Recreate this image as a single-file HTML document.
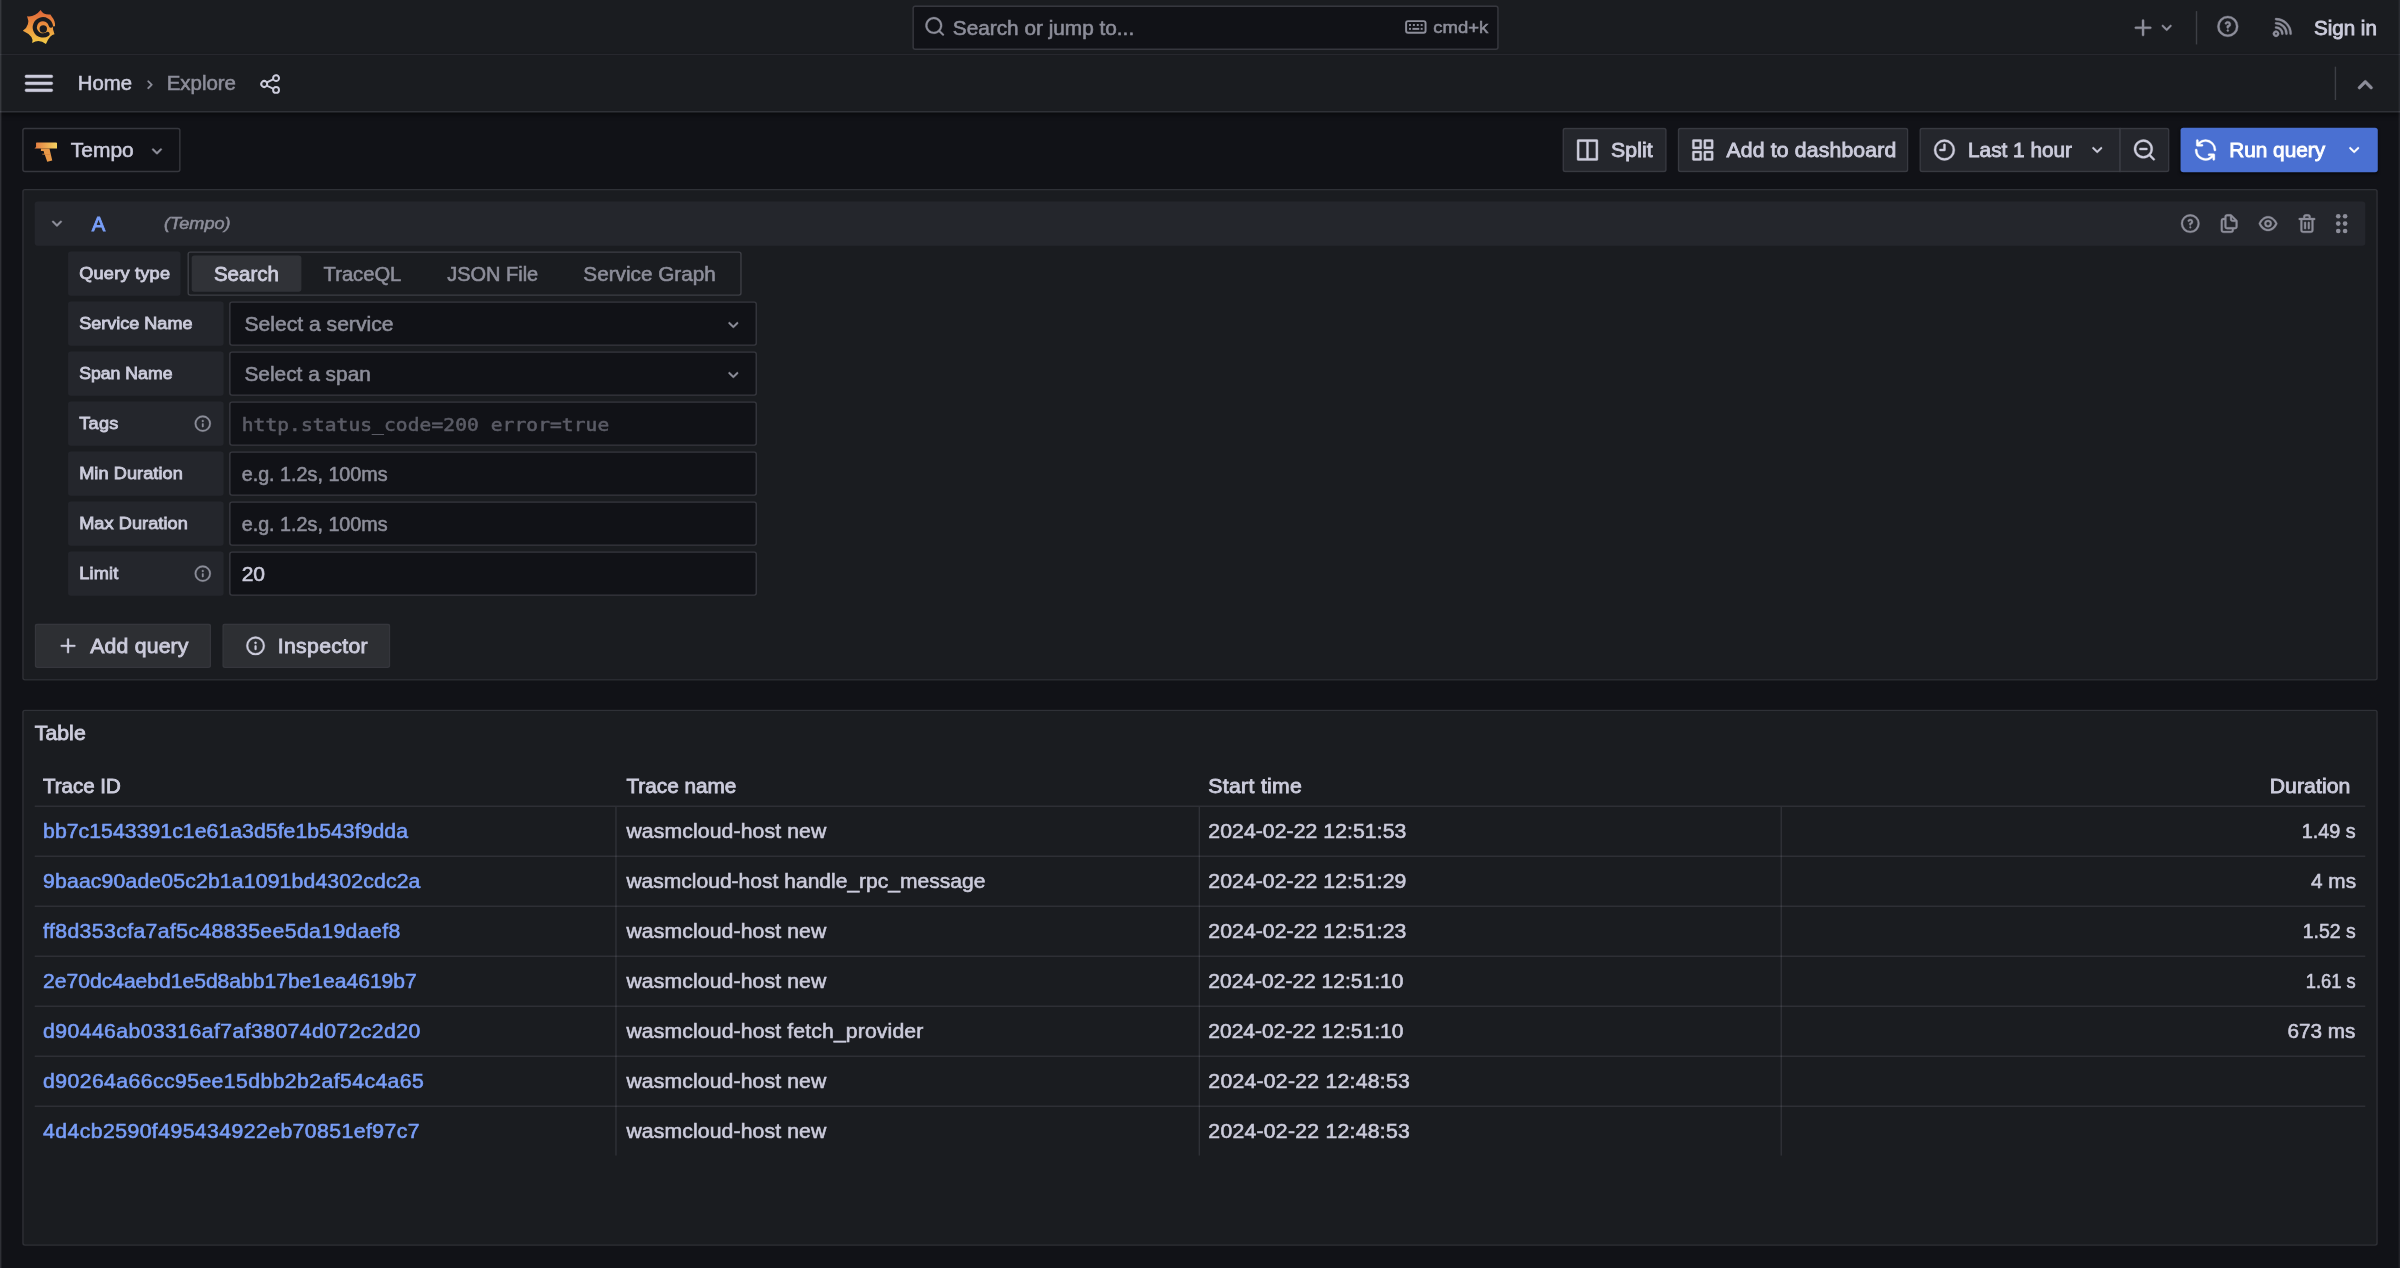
<!DOCTYPE html>
<html lang="en">
<head>
<meta charset="utf-8">
<title>Explore - Tempo - Grafana</title>
<style>
*{box-sizing:border-box;margin:0;padding:0}
html,body{width:2400px;height:1268px;overflow:hidden;background:#111217}
body{font-family:"Liberation Sans",Arial,sans-serif;font-size:14px;line-height:22px;color:#ccccdc;-webkit-font-smoothing:antialiased}
#app{position:absolute;left:0;top:0;width:1728px;height:913px;transform:scale(1.388889);transform-origin:0 0;overflow:hidden;will-change:transform}
.abs{position:absolute}
svg{display:block;fill:currentColor}
.t.md{-webkit-text-stroke:.58px currentColor}
.t{position:absolute;white-space:nowrap;letter-spacing:.03em;-webkit-text-stroke:.4px currentColor}
/* top bars */
#l1{left:0;top:0;width:1728px;height:40px;background:#1a1c20;border-bottom:1px solid rgba(204,204,220,.12)}
#l2{left:0;top:40px;width:1728px;height:41px;background:#1a1c20;border-bottom:1px solid rgba(204,204,220,.12);box-shadow:0 2px 4px rgba(0,0,0,.55)}
#edgeL{left:0;top:0;width:.7px;height:913px;background:rgba(204,204,220,.16);z-index:50}
#edgeR{left:1726.9px;top:0;width:1.1px;height:913px;background:rgba(204,204,220,.09);z-index:50}
#search{left:657px;top:3.8px;width:422px;height:32px;background:#111217;border:1px solid rgba(204,204,220,.2);border-radius:2px}
.vdiv{width:1px;height:24px;background:rgba(204,204,220,.2)}
/* toolbar buttons */
.btn{position:absolute;top:92px;height:32px;border-radius:2px;background:#24262c;border:1px solid rgba(204,204,220,.12)}
.btn2{position:absolute;height:32px;border-radius:2px;background:rgba(204,204,220,.105);border:1px solid rgba(204,204,220,.055)}
/* panels */
.panel{position:absolute;left:16px;width:1696px;background:#1a1c20;border:1px solid rgba(204,204,220,.12);border-radius:2px}
#qhead{left:25px;top:145px;width:1678px;height:32px;background:#24262c;border-radius:2px}
.lbl{position:absolute;left:49px;width:112px;height:32px;background:#24262c;border-radius:2px}
.inp{position:absolute;left:165px;width:380px;height:32px;background:#111217;border:1px solid rgba(204,204,220,.2);border-radius:2px}
/* table */
.hl{position:absolute;left:25px;width:1678px;height:1px;background:rgba(204,204,220,.12)}
.vl{position:absolute;top:580px;width:1px;height:252px;background:rgba(204,204,220,.12)}
</style>
</head>
<body>
<div id="app">
<div id="l1" class="abs"></div>
<svg class="abs" style="left:10.8px;top:2.88px" width="36" height="33.12" viewBox="0 0 1378 1268">
<linearGradient id="gg" x1="0" y1="1" x2="0" y2="0"><stop offset="0" stop-color="#f3cc46"/><stop offset=".55" stop-color="#eb8f3e"/><stop offset="1" stop-color="#df6439"/></linearGradient>
<path fill="url(#gg)" d="M700,162 Q766,300 968,285 L1008,345 C1078,430 1106,520 1096,612 L1048,628 L1044,705 L1082,830 Q960,836 845,1098 Q655,951 465,1072 Q528,886 208,735 Q430,585 325,335 Q538,362 700,162 Z"/>
<path fill="none" stroke="#1a1c20" stroke-width="116" stroke-linecap="round" d="M982,592 A224,224 0 1 0 890,822"/>
<circle cx="772" cy="684" r="102" fill="#1a1c20"/>
<path fill="#1a1c20" d="M1030,612 L1106,626 L1062,722 Z"/>
</svg>
<div id="search" class="abs"></div>
<svg class="abs" style="left:664.77px;top:11.30px;color:#8d8e9a;" width="16" height="16" viewBox="0 0 24 24"><path stroke="currentColor" stroke-width="0.35" d="M21.71,20.29,18,16.61A9,9,0,1,0,16.61,18l3.68,3.68a1,1,0,0,0,1.42,0A1,1,0,0,0,21.71,20.29ZM11,18a7,7,0,1,1,7-7A7,7,0,0,1,11,18Z"/></svg>
<span class="t " style="letter-spacing:0.000px;transform:scaleX(1.0691);transform-origin:left center;top:8.51px;font-size:14px;left:686.16px;color:#8d8e9a;">Search or jump to...</span>
<svg class="abs" style="left:1010.74px;top:11.02px;color:#8d8e9a" width="16.8" height="16.8" viewBox="0 0 24 24"><path fill-rule="evenodd" d="M20,5H4A3,3,0,0,0,1,8v8a3,3,0,0,0,3,3H20a3,3,0,0,0,3-3V8A3,3,0,0,0,20,5Zm1,11a1,1,0,0,1-1,1H4a1,1,0,0,1-1-1V8A1,1,0,0,1,4,7H20a1,1,0,0,1,1,1Z"/><rect x="5" y="9" width="2" height="2"/><rect x="9" y="9" width="2" height="2"/><rect x="13" y="9" width="2" height="2"/><rect x="17" y="9" width="2" height="2"/><rect x="5" y="13" width="2" height="2"/><rect x="8.5" y="13" width="7" height="2"/><rect x="17" y="13" width="2" height="2"/></svg>
<span class="t " style="letter-spacing:0.000px;transform:scaleX(1.0653);transform-origin:left center;top:9.09px;font-size:12.5px;left:1031.62px;color:#8d8e9a;">cmd+k</span>
<svg class="abs" style="left:1534.25px;top:10.58px;color:#8d8e9a;" width="18" height="18" viewBox="0 0 24 24"><path stroke="currentColor" stroke-width="0.35" d="M19,11H13V5a1,1,0,0,0-2,0v6H5a1,1,0,0,0,0,2h6v6a1,1,0,0,0,2,0V13h6a1,1,0,0,0,0-2Z"/></svg>
<svg class="abs" style="left:1552.24px;top:11.58px;color:#8d8e9a;" width="16" height="16" viewBox="0 0 24 24"><path stroke="currentColor" stroke-width="0.35" d="M17,9.17a1,1,0,0,0-1.41,0L12,12.71,8.46,9.17a1,1,0,0,0-1.41,0,1,1,0,0,0,0,1.42l4.24,4.24a1,1,0,0,0,1.42,0L17,10.59A1,1,0,0,0,17,9.17Z"/></svg>
<div class="abs vdiv" style="left:1581.41px;top:7.63px"></div>
<svg class="abs" style="left:1595.09px;top:10.15px;color:#8d8e9a;" width="18" height="18" viewBox="0 0 24 24"><path stroke="currentColor" stroke-width="0.35" d="M11.29,15.29a1.58,1.58,0,0,0-.12.15.76.76,0,0,0-.09.18.64.64,0,0,0-.06.18,1.36,1.36,0,0,0,0,.2.84.84,0,0,0,.08.38.9.9,0,0,0,.54.54.94.94,0,0,0,.76,0,.9.9,0,0,0,.54-.54A1,1,0,0,0,13,16a1,1,0,0,0-.29-.71A1,1,0,0,0,11.29,15.29ZM12,2A10,10,0,1,0,22,12,10,10,0,0,0,12,2Zm0,18a8,8,0,1,1,8-8A8,8,0,0,1,12,20ZM12,7A3,3,0,0,0,9.4,8.5a1,1,0,1,0,1.73,1A1,1,0,0,1,12,9a1,1,0,0,1,0,2,1,1,0,0,0-1,1v1a1,1,0,0,0,2,0v-.18A3,3,0,0,0,12,7Z"/></svg>
<svg class="abs" style="left:1635.19px;top:10.08px;color:#8d8e9a;" width="18" height="18" viewBox="0 0 24 24"><path stroke="currentColor" stroke-width="0.35" d="M2.88,16.88a3,3,0,0,0,0,4.24,3,3,0,0,0,4.24,0,3,3,0,0,0-4.24-4.24Zm2.83,2.83a1,1,0,0,1-1.42-1.42,1,1,0,0,1,1.42,0A1,1,0,0,1,5.71,19.71ZM5,12a1,1,0,0,0,0,2,5,5,0,0,1,5,5,1,1,0,0,0,2,0,7,7,0,0,0-7-7ZM5,8A1,1,0,0,0,5,10a9,9,0,0,1,9,9,1,1,0,0,0,2,0,11.08,11.08,0,0,0-3.22-7.78A11.08,11.08,0,0,0,5,8Zm10.61.39A15.11,15.11,0,0,0,5,4,1,1,0,0,0,5,6,13,13,0,0,1,18,19a1,1,0,0,0,2,0A15.11,15.11,0,0,0,15.61,8.39Z"/></svg>
<span class="t md" style="letter-spacing:0.000px;transform:scaleX(1.0595);transform-origin:left center;top:9.02px;font-size:14px;left:1666.37px;color:#ccccdc;">Sign in</span>
<div id="l2" class="abs"></div>
<svg class="abs" style="left:16.08px;top:47.98px;color:#ccccdc;" width="24" height="24" viewBox="0 0 24 24"><path stroke="currentColor" stroke-width="0.35" d="M3,8H21a1,1,0,0,0,0-2H3A1,1,0,0,0,3,8Zm18,8H3a1,1,0,0,0,0,2H21a1,1,0,0,0,0-2Zm0-5H3a1,1,0,0,0,0,2H21a1,1,0,0,0,0-2Z"/></svg>
<span class="t " style="letter-spacing:0.000px;transform:scaleX(1.0444);transform-origin:left center;top:49.48px;font-size:14px;left:56.38px;color:#ccccdc;">Home</span>
<svg class="abs" style="left:100.64px;top:53.84px;color:#8d8e9a;" width="14" height="14" viewBox="0 0 24 24"><path stroke="currentColor" stroke-width="0.35" d="M14.83,11.29,10.59,7.05a1,1,0,0,0-1.42,0,1,1,0,0,0,0,1.41L12.71,12,9.17,15.54a1,1,0,0,0,0,1.41,1,1,0,0,0,.71.29,1,1,0,0,0,.71-.29l4.24-4.24A1,1,0,0,0,14.83,11.29Z"/></svg>
<span class="t " style="letter-spacing:-0.000px;transform:scaleX(1.0512);transform-origin:left center;top:49.48px;font-size:14px;left:119.52px;color:#8d8e9a;">Explore</span>
<svg class="abs" style="left:185.90px;top:52.41px;color:#ccccdc;" width="17" height="17" viewBox="0 0 24 24"><path stroke="currentColor" stroke-width="0" d="M18,14a4,4,0,0,0-3.08,1.48l-5.1-2.35a3.64,3.64,0,0,0,0-2.26l5.1-2.35A4,4,0,1,0,14,6a4.17,4.17,0,0,0,.07.71L8.79,9.14a4,4,0,1,0,0,5.72l5.28,2.43A4.17,4.17,0,0,0,14,18a4,4,0,1,0,4-4ZM18,4a2,2,0,1,1-2,2A2,2,0,0,1,18,4ZM6,14a2,2,0,1,1,2-2A2,2,0,0,1,6,14Zm12,6a2,2,0,1,1,2-2A2,2,0,0,1,18,20Z"/></svg>
<div class="abs vdiv" style="left:1681.06px;top:48.17px"></div>
<svg class="abs" style="left:1691.02px;top:48.62px;color:#8d8e9a;" width="24" height="24" viewBox="0 0 24 24"><path stroke="currentColor" stroke-width="0.35" d="M17,13.41,12.71,9.17a1,1,0,0,0-1.42,0L7.05,13.41a1,1,0,0,0,0,1.42,1,1,0,0,0,1.41,0L12,11.29l3.54,3.54a1,1,0,0,0,.7.29,1,1,0,0,0,.71-.29A1,1,0,0,0,17,13.41Z"/></svg>
<div class="abs" style="left:16.06px;top:92px;width:113.54px;height:32px;background:#111217;border:1px solid rgba(204,204,220,.2);border-radius:2px"></div>
<svg class="abs" style="left:18px;top:93.6px" width="36" height="28.8" viewBox="0 0 1585 1268">
<linearGradient id="tg" x1="0" y1="0" x2="1" y2="0"><stop offset="0" stop-color="#e27941"/><stop offset="1" stop-color="#f4d260"/></linearGradient>
<path fill="url(#tg)" d="M365,378 H985 Q1015,378 1015,408 V572 H300 L350,520 V393 Q350,378 365,378 Z"/>
<path fill="#e89847" d="M505,572 H775 L865,950 L705,990 L625,760 H550 V735 H612 L590,645 H505 Z"/>
<path fill="#cf7a3a" d="M612,748 H812 V766 H618 Z"/>
</svg>
<span class="t " style="letter-spacing:0.000px;transform:scaleX(1.0775);transform-origin:left center;top:96.78px;font-size:14px;left:51.34px;color:#ccccdc;">Tempo</span>
<svg class="abs" style="left:104.75px;top:101.15px;color:#8d8e9a;" width="16" height="16" viewBox="0 0 24 24"><path stroke="currentColor" stroke-width="0.35" d="M17,9.17a1,1,0,0,0-1.41,0L12,12.71,8.46,9.17a1,1,0,0,0-1.41,0,1,1,0,0,0,0,1.42l4.24,4.24a1,1,0,0,0,1.42,0L17,10.59A1,1,0,0,0,17,9.17Z"/></svg>
<div class="btn" style="left:1125.07px;width:74.95px;"></div>
<svg class="abs" style="left:1134.36px;top:98.86px;color:#ccccdc;" width="18" height="18" viewBox="0 0 24 24"><path stroke="currentColor" stroke-width="0.35" d="M21,2H3A1,1,0,0,0,2,3V21a1,1,0,0,0,1,1H21a1,1,0,0,0,1-1V3A1,1,0,0,0,21,2ZM11,20H4V4h7Zm9,0H13V4h7Z"/></svg>
<span class="t md" style="letter-spacing:0.054px;transform:scaleX(1.0900);transform-origin:left center;top:96.78px;font-size:14px;left:1160.42px;color:#ccccdc;">Split</span>
<div class="btn" style="left:1207.94px;width:166.03px;"></div>
<svg class="abs" style="left:1217.02px;top:98.86px;color:#ccccdc;" width="18" height="18" viewBox="0 0 24 24"><path stroke="currentColor" stroke-width="0.35" d="M10,13H3a1,1,0,0,0-1,1v7a1,1,0,0,0,1,1h7a1,1,0,0,0,1-1V14A1,1,0,0,0,10,13ZM9,20H4V15H9ZM21,2H14a1,1,0,0,0-1,1v7a1,1,0,0,0,1,1h7a1,1,0,0,0,1-1V3A1,1,0,0,0,21,2ZM20,9H15V4h5Zm1,4H14a1,1,0,0,0-1,1v7a1,1,0,0,0,1,1h7a1,1,0,0,0,1-1V14A1,1,0,0,0,21,13Zm-1,7H15V15h5ZM10,2H3A1,1,0,0,0,2,3v7a1,1,0,0,0,1,1h7a1,1,0,0,0,1-1V3A1,1,0,0,0,10,2ZM9,9H4V4H9Z"/></svg>
<span class="t md" style="letter-spacing:0.114px;transform:scaleX(1.0900);transform-origin:left center;top:96.78px;font-size:14px;left:1242.72px;color:#ccccdc;">Add to dashboard</span>
<div class="btn" style="left:1381.9px;width:144.86px;border-radius:2px 0 0 2px"></div>
<svg class="abs" style="left:1390.82px;top:98.86px;color:#ccccdc;" width="18" height="18" viewBox="0 0 24 24"><path stroke="currentColor" stroke-width="0.35" d="M12,2A10,10,0,1,0,22,12,10.01114,10.01114,0,0,0,12,2Zm0,18a8,8,0,1,1,8-8A8.00917,8.00917,0,0,1,12,20ZM12,6a.99974.99974,0,0,0-1,1v4H8a1,1,0,0,0,0,2h4a.99974.99974,0,0,0,1-1V7A.99974.99974,0,0,0,12,6Z"/></svg>
<span class="t md" style="letter-spacing:0.000px;transform:scaleX(1.0688);transform-origin:left center;top:96.78px;font-size:14px;left:1416.74px;color:#ccccdc;">Last 1 hour</span>
<svg class="abs" style="left:1501.84px;top:100.14px;color:#ccccdc;" width="16" height="16" viewBox="0 0 24 24"><path stroke="currentColor" stroke-width="0.35" d="M17,9.17a1,1,0,0,0-1.41,0L12,12.71,8.46,9.17a1,1,0,0,0-1.41,0,1,1,0,0,0,0,1.42l4.24,4.24a1,1,0,0,0,1.42,0L17,10.59A1,1,0,0,0,17,9.17Z"/></svg>
<div class="btn" style="left:1525.9px;width:36px;border-radius:0 2px 2px 0"></div>
<svg class="abs" style="left:1534.90px;top:99.00px;color:#ccccdc;" width="18" height="18" viewBox="0 0 24 24"><path stroke="currentColor" stroke-width="0.35" d="M21.71,20.29,18,16.61A9,9,0,1,0,16.61,18l3.68,3.68a1,1,0,0,0,1.42,0A1,1,0,0,0,21.71,20.29ZM11,18a7,7,0,1,1,7-7A7,7,0,0,1,11,18Zm3-8H8a1,1,0,0,0,0,2h6a1,1,0,0,0,0-2Z"/></svg>
<div class="abs" style="left:1569.6px;top:91.66px;width:142.78px;height:32.69px;background:#4a70d2;border-radius:2px;box-shadow:0 1px 2px rgba(0,0,0,.6)"></div>
<svg class="abs" style="left:1578.96px;top:98.86px;color:#fff;" width="18" height="18" viewBox="0 0 24 24"><path stroke="currentColor" stroke-width="0.35" d="M19.91,15.51H15.38a1,1,0,0,0,0,2h2.4A8,8,0,0,1,4,12a1,1,0,0,0-2,0,10,10,0,0,0,16.88,7.23V21a1,1,0,0,0,2,0V16.5A1,1,0,0,0,19.91,15.51ZM12,2A10,10,0,0,0,5.12,4.77V3a1,1,0,0,0-2,0V7.5a1,1,0,0,0,1,1h4.5a1,1,0,0,0,0-2H6.22A8,8,0,0,1,20,12a1,1,0,0,0,2,0A10,10,0,0,0,12,2Z"/></svg>
<span class="t md" style="letter-spacing:0.000px;transform:scaleX(1.0701);transform-origin:left center;top:96.78px;font-size:14px;left:1604.88px;color:#fff;">Run query</span>
<svg class="abs" style="left:1687.24px;top:100.36px;color:#fff;" width="16" height="16" viewBox="0 0 24 24"><path stroke="currentColor" stroke-width="0.35" d="M17,9.17a1,1,0,0,0-1.41,0L12,12.71,8.46,9.17a1,1,0,0,0-1.41,0,1,1,0,0,0,0,1.42l4.24,4.24a1,1,0,0,0,1.42,0L17,10.59A1,1,0,0,0,17,9.17Z"/></svg>
<div class="panel" style="top:136.3px;height:354.17px"></div>
<div id="qhead" class="abs"></div>
<svg class="abs" style="left:33.04px;top:153.28px;color:#8d8e9a;" width="16" height="16" viewBox="0 0 24 24"><path stroke="currentColor" stroke-width="0.35" d="M17,9.17a1,1,0,0,0-1.41,0L12,12.71,8.46,9.17a1,1,0,0,0-1.41,0,1,1,0,0,0,0,1.42l4.24,4.24a1,1,0,0,0,1.42,0L17,10.59A1,1,0,0,0,17,9.17Z"/></svg>
<span class="t md" style="letter-spacing:0.000px;transform:scaleX(1.0478);transform-origin:left center;top:149.56px;font-size:14px;left:66.02px;color:#799ef8;">A</span>
<span class="t " style="letter-spacing:-0.000px;transform:scaleX(1.0852);transform-origin:left center;top:149.56px;font-size:12px;left:117.58px;color:#8d8e9a;font-style:italic;">(Tempo)</span>
<svg class="abs" style="left:1568.80px;top:152.78px;color:#8d8e9a;" width="16" height="16" viewBox="0 0 24 24"><path stroke="currentColor" stroke-width="0.35" d="M11.29,15.29a1.58,1.58,0,0,0-.12.15.76.76,0,0,0-.09.18.64.64,0,0,0-.06.18,1.36,1.36,0,0,0,0,.2.84.84,0,0,0,.08.38.9.9,0,0,0,.54.54.94.94,0,0,0,.76,0,.9.9,0,0,0,.54-.54A1,1,0,0,0,13,16a1,1,0,0,0-.29-.71A1,1,0,0,0,11.29,15.29ZM12,2A10,10,0,1,0,22,12,10,10,0,0,0,12,2Zm0,18a8,8,0,1,1,8-8A8,8,0,0,1,12,20ZM12,7A3,3,0,0,0,9.4,8.5a1,1,0,1,0,1.73,1A1,1,0,0,1,12,9a1,1,0,0,1,0,2,1,1,0,0,0-1,1v1a1,1,0,0,0,2,0v-.18A3,3,0,0,0,12,7Z"/></svg>
<svg class="abs" style="left:1596.88px;top:152.78px;color:#8d8e9a;" width="16" height="16" viewBox="0 0 24 24"><path stroke="currentColor" stroke-width="0.35" d="M21,8.94a1.31,1.31,0,0,0-.06-.27l0-.09a1.07,1.07,0,0,0-.19-.28h0l-6-6h0a1.07,1.07,0,0,0-.28-.19.32.32,0,0,0-.09,0A.88.88,0,0,0,14.05,2H10A3,3,0,0,0,7,5V6H6A3,3,0,0,0,3,9V19a3,3,0,0,0,3,3h8a3,3,0,0,0,3-3V18h1a3,3,0,0,0,3-3V9S21,9,21,8.94ZM15,5.41,17.59,8H16a1,1,0,0,1-1-1ZM15,19a1,1,0,0,1-1,1H6a1,1,0,0,1-1-1V9A1,1,0,0,1,6,8H7v7a3,3,0,0,0,3,3h5Zm4-4a1,1,0,0,1-1,1H10a1,1,0,0,1-1-1V5a1,1,0,0,1,1-1h3V7a3,3,0,0,0,3,3h3Z"/></svg>
<svg class="abs" style="left:1624.74px;top:152.78px;color:#8d8e9a;" width="16" height="16" viewBox="0 0 24 24"><path stroke="currentColor" stroke-width="0.35" d="M21.92,11.6C19.9,6.91,16.1,4,12,4S4.1,6.91,2.08,11.6a1,1,0,0,0,0,.8C4.1,17.09,7.9,20,12,20s7.9-2.91,9.92-7.6A1,1,0,0,0,21.92,11.6ZM12,18c-3.17,0-6.17-2.29-7.9-6C5.83,8.29,8.83,6,12,6s6.17,2.29,7.9,6C18.17,15.71,15.17,18,12,18ZM12,8a4,4,0,1,0,4,4A4,4,0,0,0,12,8Zm0,6a2,2,0,1,1,2-2A2,2,0,0,1,12,14Z"/></svg>
<svg class="abs" style="left:1652.82px;top:152.78px;color:#8d8e9a;" width="16" height="16" viewBox="0 0 24 24"><path stroke="currentColor" stroke-width="0.35" d="M10,18a1,1,0,0,0,1-1V11a1,1,0,0,0-2,0v6A1,1,0,0,0,10,18ZM20,6H16V5a3,3,0,0,0-3-3H11A3,3,0,0,0,8,5V6H4A1,1,0,0,0,4,8H5V19a3,3,0,0,0,3,3h8a3,3,0,0,0,3-3V8h1a1,1,0,0,0,0-2ZM10,5a1,1,0,0,1,1-1h2a1,1,0,0,1,1,1V6H10Zm7,14a1,1,0,0,1-1,1H8a1,1,0,0,1-1-1V8H17Zm-3-1a1,1,0,0,0,1-1V11a1,1,0,0,0-2,0v6A1,1,0,0,0,14,18Z"/></svg>
<svg class="abs" style="left:1678.02px;top:152.78px;color:#8d8e9a" width="16" height="16" viewBox="0 0 24 24"><circle cx="8.3" cy="4" r="2.5"/><circle cx="15.7" cy="4" r="2.5"/><circle cx="8.3" cy="12" r="2.5"/><circle cx="15.7" cy="12" r="2.5"/><circle cx="8.3" cy="20" r="2.5"/><circle cx="15.7" cy="20" r="2.5"/></svg>
<div class="lbl" style="top:181.22px;width:81.36px"></div>
<span class="t md" style="letter-spacing:0.148px;transform:scaleX(1.0900);transform-origin:left center;top:186.06px;font-size:12px;left:56.88px;color:#ccccdc;">Query type</span>
<div class="abs" style="left:134.64px;top:181.22px;width:399.82px;height:32px;background:#1a1c20;border:1px solid rgba(204,204,220,.2);border-radius:2px"></div>
<div class="abs" style="left:137.52px;top:184.1px;width:79.7px;height:26px;background:rgba(204,204,220,.13);border-radius:2px"></div>
<span class="t md" style="letter-spacing:0.000px;transform:scaleX(1.0550);transform-origin:left center;top:185.56px;font-size:14px;left:153.58px;color:#ccccdc;">Search</span>
<span class="t " style="letter-spacing:0.000px;transform:scaleX(1.0368);transform-origin:left center;top:185.56px;font-size:14px;left:233.28px;color:#8d8e9a;">TraceQL</span>
<span class="t " style="letter-spacing:-0.000px;transform:scaleX(1.0270);transform-origin:left center;top:185.56px;font-size:14px;left:322.06px;color:#8d8e9a;">JSON File</span>
<span class="t " style="letter-spacing:0.000px;transform:scaleX(1.0653);transform-origin:left center;top:185.56px;font-size:14px;left:419.98px;color:#8d8e9a;">Service Graph</span>
<div class="lbl" style="top:217.22px"></div>
<span class="t md" style="letter-spacing:-0.000px;transform:scaleX(1.0825);transform-origin:left center;top:222.06px;font-size:12px;left:56.88px;color:#ccccdc;">Service Name</span>
<div class="inp" style="top:217.22px"></div>
<div class="lbl" style="top:253.22px"></div>
<span class="t md" style="letter-spacing:0.000px;transform:scaleX(1.0600);transform-origin:left center;top:258.06px;font-size:12px;left:56.88px;color:#ccccdc;">Span Name</span>
<div class="inp" style="top:253.22px"></div>
<div class="lbl" style="top:289.22px"></div>
<span class="t md" style="letter-spacing:0.173px;transform:scaleX(1.0900);transform-origin:left center;top:294.06px;font-size:12px;left:56.88px;color:#ccccdc;">Tags</span>
<div class="inp" style="top:289.22px"></div>
<div class="lbl" style="top:325.22px"></div>
<span class="t md" style="letter-spacing:0.040px;transform:scaleX(1.0900);transform-origin:left center;top:330.06px;font-size:12px;left:56.88px;color:#ccccdc;">Min Duration</span>
<div class="inp" style="top:325.22px"></div>
<div class="lbl" style="top:361.22px"></div>
<span class="t md" style="letter-spacing:0.037px;transform:scaleX(1.0900);transform-origin:left center;top:366.06px;font-size:12px;left:56.88px;color:#ccccdc;">Max Duration</span>
<div class="inp" style="top:361.22px"></div>
<div class="lbl" style="top:397.22px"></div>
<span class="t md" style="letter-spacing:0.138px;transform:scaleX(1.0900);transform-origin:left center;top:402.06px;font-size:12px;left:56.88px;color:#ccccdc;">Limit</span>
<div class="inp" style="top:397.22px"></div>
<svg class="abs" style="left:138.94px;top:298.06px;color:#8d8e9a;" width="14" height="14" viewBox="0 0 24 24"><path stroke="currentColor" stroke-width="0.35" d="M12,2A10,10,0,1,0,22,12,10.01114,10.01114,0,0,0,12,2Zm0,18a8,8,0,1,1,8-8A8.00917,8.00917,0,0,1,12,20Zm0-8.5a1,1,0,0,0-1,1v3a1,1,0,0,0,2,0v-3A1,1,0,0,0,12,11.5Zm0-4a1.25,1.25,0,1,0,1.25,1.25A1.25,1.25,0,0,0,12,7.5Z"/></svg>
<svg class="abs" style="left:138.94px;top:406.06px;color:#8d8e9a;" width="14" height="14" viewBox="0 0 24 24"><path stroke="currentColor" stroke-width="0.35" d="M12,2A10,10,0,1,0,22,12,10.01114,10.01114,0,0,0,12,2Zm0,18a8,8,0,1,1,8-8A8.00917,8.00917,0,0,1,12,20Zm0-8.5a1,1,0,0,0-1,1v3a1,1,0,0,0,2,0v-3A1,1,0,0,0,12,11.5Zm0-4a1.25,1.25,0,1,0,1.25,1.25A1.25,1.25,0,0,0,12,7.5Z"/></svg>
<span class="t " style="letter-spacing:0.000px;transform:scaleX(1.0855);transform-origin:left center;top:222.21px;font-size:14px;left:175.90px;color:#8d8e9a;">Select a service</span>
<svg class="abs" style="left:519.76px;top:226.14px;color:#8d8e9a;" width="16" height="16" viewBox="0 0 24 24"><path stroke="currentColor" stroke-width="0.35" d="M17,9.17a1,1,0,0,0-1.41,0L12,12.71,8.46,9.17a1,1,0,0,0-1.41,0,1,1,0,0,0,0,1.42l4.24,4.24a1,1,0,0,0,1.42,0L17,10.59A1,1,0,0,0,17,9.17Z"/></svg>
<span class="t " style="letter-spacing:0.000px;transform:scaleX(1.0727);transform-origin:left center;top:258.21px;font-size:14px;left:175.90px;color:#8d8e9a;">Select a span</span>
<svg class="abs" style="left:519.76px;top:262.14px;color:#8d8e9a;" width="16" height="16" viewBox="0 0 24 24"><path stroke="currentColor" stroke-width="0.35" d="M17,9.17a1,1,0,0,0-1.41,0L12,12.71,8.46,9.17a1,1,0,0,0-1.41,0,1,1,0,0,0,0,1.42l4.24,4.24a1,1,0,0,0,1.42,0L17,10.59A1,1,0,0,0,17,9.17Z"/></svg>
<span class="t " style="letter-spacing:0.073px;transform:scaleX(1.0900);transform-origin:left center;top:294.93px;font-size:12.9px;left:174.02px;color:#5b5c66;font-family:'DejaVu Sans Mono','Liberation Mono',monospace;">http.status_code=200 error=true</span>
<span class="t " style="letter-spacing:0.000px;transform:scaleX(1.0155);transform-origin:left center;top:329.56px;font-size:14px;left:174.02px;color:#8d8e9a;">e.g. 1.2s, 100ms</span>
<span class="t " style="letter-spacing:0.000px;transform:scaleX(1.0155);transform-origin:left center;top:365.56px;font-size:14px;left:174.02px;color:#8d8e9a;">e.g. 1.2s, 100ms</span>
<span class="t " style="letter-spacing:0.000px;transform:scaleX(1.0816);transform-origin:left center;top:401.63px;font-size:14px;left:174.46px;color:#ccccdc;">20</span>
<div class="btn2" style="left:24.98px;top:448.78px;width:126.94px"></div>
<svg class="abs" style="left:41.10px;top:457.12px;color:#ccccdc;" width="16" height="16" viewBox="0 0 24 24"><path stroke="currentColor" stroke-width="0.35" d="M19,11H13V5a1,1,0,0,0-2,0v6H5a1,1,0,0,0,0,2h6v6a1,1,0,0,0,2,0V13h6a1,1,0,0,0,0-2Z"/></svg>
<span class="t md" style="letter-spacing:0.130px;transform:scaleX(1.0900);transform-origin:left center;top:453.90px;font-size:14px;left:64.80px;color:#ccccdc;">Add query</span>
<div class="btn2" style="left:160.06px;top:448.78px;width:120.74px"></div>
<svg class="abs" style="left:175.96px;top:457.12px;color:#ccccdc;" width="16" height="16" viewBox="0 0 24 24"><path stroke="currentColor" stroke-width="0.35" d="M12,2A10,10,0,1,0,22,12,10.01114,10.01114,0,0,0,12,2Zm0,18a8,8,0,1,1,8-8A8.00917,8.00917,0,0,1,12,20Zm0-8.5a1,1,0,0,0-1,1v3a1,1,0,0,0,2,0v-3A1,1,0,0,0,12,11.5Zm0-4a1.25,1.25,0,1,0,1.25,1.25A1.25,1.25,0,0,0,12,7.5Z"/></svg>
<span class="t md" style="letter-spacing:0.218px;transform:scaleX(1.0900);transform-origin:left center;top:453.90px;font-size:14px;left:199.94px;color:#ccccdc;">Inspector</span>
<div class="panel" style="top:511.13px;height:385.7px"></div>
<span class="t md" style="letter-spacing:0.049px;transform:scaleX(1.0900);transform-origin:left center;top:516.98px;font-size:14px;left:25.20px;color:#ccccdc;">Table</span>
<span class="t md" style="letter-spacing:-0.000px;transform:scaleX(1.0524);transform-origin:left center;top:555.14px;font-size:14px;left:31.18px;color:#ccccdc;">Trace ID</span>
<span class="t md" style="letter-spacing:0.000px;transform:scaleX(1.0676);transform-origin:left center;top:555.14px;font-size:14px;left:450.72px;color:#ccccdc;">Trace name</span>
<span class="t md" style="letter-spacing:0.209px;transform:scaleX(1.0900);transform-origin:left center;top:555.14px;font-size:14px;left:869.98px;color:#ccccdc;">Start time</span>
<span class="t md" style="letter-spacing:0.051px;transform:scaleX(1.0900);transform-origin:right center;top:555.14px;font-size:14px;right:35.50px;color:#ccccdc;">Duration</span>
<div class="hl" style="top:579.96px"></div>
<div class="hl" style="top:615.96px"></div>
<div class="hl" style="top:651.96px"></div>
<div class="hl" style="top:687.96px"></div>
<div class="hl" style="top:723.96px"></div>
<div class="hl" style="top:759.96px"></div>
<div class="hl" style="top:795.96px"></div>
<div class="vl" style="left:443.38px;top:580.97px;height:251.35px"></div>
<div class="vl" style="left:862.78px;top:580.97px;height:251.35px"></div>
<div class="vl" style="left:1282.18px;top:580.97px;height:251.35px"></div>
<span class="t " style="letter-spacing:0.041px;transform:scaleX(1.0900);transform-origin:left center;top:587.32px;font-size:14px;left:31.18px;color:#799ef8;">bb7c1543391c1e61a3d5fe1b543f9dda</span>
<span class="t " style="letter-spacing:0.079px;transform:scaleX(1.0900);transform-origin:left center;top:587.32px;font-size:14px;left:450.72px;color:#ccccdc;">wasmcloud-host new</span>
<span class="t " style="letter-spacing:0.043px;transform:scaleX(1.0900);transform-origin:left center;top:587.32px;font-size:14px;left:869.98px;color:#ccccdc;">2024-02-22 12:51:53</span>
<span class="t " style="letter-spacing:0.000px;transform:scaleX(1.0194);transform-origin:right center;top:587.32px;font-size:14px;right:31.68px;color:#ccccdc;">1.49 s</span>
<span class="t " style="letter-spacing:0.104px;transform:scaleX(1.0900);transform-origin:left center;top:623.32px;font-size:14px;left:31.18px;color:#799ef8;">9baac90ade05c2b1a1091bd4302cdc2a</span>
<span class="t " style="letter-spacing:0.000px;transform:scaleX(1.0819);transform-origin:left center;top:623.32px;font-size:14px;left:450.72px;color:#ccccdc;">wasmcloud-host handle_rpc_message</span>
<span class="t " style="letter-spacing:0.043px;transform:scaleX(1.0900);transform-origin:left center;top:623.32px;font-size:14px;left:869.98px;color:#ccccdc;">2024-02-22 12:51:29</span>
<span class="t " style="letter-spacing:0.000px;transform:scaleX(1.0678);transform-origin:right center;top:623.32px;font-size:14px;right:31.68px;color:#ccccdc;">4 ms</span>
<span class="t " style="letter-spacing:0.261px;transform:scaleX(1.0900);transform-origin:left center;top:659.32px;font-size:14px;left:31.18px;color:#799ef8;">ff8d353cfa7af5c48835ee5da19daef8</span>
<span class="t " style="letter-spacing:0.079px;transform:scaleX(1.0900);transform-origin:left center;top:659.32px;font-size:14px;left:450.72px;color:#ccccdc;">wasmcloud-host new</span>
<span class="t " style="letter-spacing:0.043px;transform:scaleX(1.0900);transform-origin:left center;top:659.32px;font-size:14px;left:869.98px;color:#ccccdc;">2024-02-22 12:51:23</span>
<span class="t " style="letter-spacing:0.000px;transform:scaleX(1.0005);transform-origin:right center;top:659.32px;font-size:14px;right:31.68px;color:#ccccdc;">1.52 s</span>
<span class="t " style="letter-spacing:0.000px;transform:scaleX(1.0833);transform-origin:left center;top:695.32px;font-size:14px;left:31.18px;color:#799ef8;">2e70dc4aebd1e5d8abb17be1ea4619b7</span>
<span class="t " style="letter-spacing:0.079px;transform:scaleX(1.0900);transform-origin:left center;top:695.32px;font-size:14px;left:450.72px;color:#ccccdc;">wasmcloud-host new</span>
<span class="t " style="letter-spacing:0.000px;transform:scaleX(1.0800);transform-origin:left center;top:695.32px;font-size:14px;left:869.98px;color:#ccccdc;">2024-02-22 12:51:10</span>
<span class="t " style="letter-spacing:0.000px;transform:scaleX(0.9439);transform-origin:right center;top:695.32px;font-size:14px;right:31.68px;color:#ccccdc;">1.61 s</span>
<span class="t " style="letter-spacing:0.277px;transform:scaleX(1.0900);transform-origin:left center;top:731.32px;font-size:14px;left:31.18px;color:#799ef8;">d90446ab03316af7af38074d072c2d20</span>
<span class="t " style="letter-spacing:0.085px;transform:scaleX(1.0900);transform-origin:left center;top:731.32px;font-size:14px;left:450.72px;color:#ccccdc;">wasmcloud-host fetch_provider</span>
<span class="t " style="letter-spacing:0.000px;transform:scaleX(1.0800);transform-origin:left center;top:731.32px;font-size:14px;left:869.98px;color:#ccccdc;">2024-02-22 12:51:10</span>
<span class="t " style="letter-spacing:-0.000px;transform:scaleX(1.0662);transform-origin:right center;top:731.32px;font-size:14px;right:31.68px;color:#ccccdc;">673 ms</span>
<span class="t " style="letter-spacing:0.278px;transform:scaleX(1.0900);transform-origin:left center;top:767.32px;font-size:14px;left:31.18px;color:#799ef8;">d90264a66cc95ee15dbb2b2af54c4a65</span>
<span class="t " style="letter-spacing:0.079px;transform:scaleX(1.0900);transform-origin:left center;top:767.32px;font-size:14px;left:450.72px;color:#ccccdc;">wasmcloud-host new</span>
<span class="t " style="letter-spacing:0.168px;transform:scaleX(1.0900);transform-origin:left center;top:767.32px;font-size:14px;left:869.98px;color:#ccccdc;">2024-02-22 12:48:53</span>
<span class="t " style="letter-spacing:0.287px;transform:scaleX(1.0900);transform-origin:left center;top:803.32px;font-size:14px;left:31.18px;color:#799ef8;">4d4cb2590f495434922eb70851ef97c7</span>
<span class="t " style="letter-spacing:0.079px;transform:scaleX(1.0900);transform-origin:left center;top:803.32px;font-size:14px;left:450.72px;color:#ccccdc;">wasmcloud-host new</span>
<span class="t " style="letter-spacing:0.168px;transform:scaleX(1.0900);transform-origin:left center;top:803.32px;font-size:14px;left:869.98px;color:#ccccdc;">2024-02-22 12:48:53</span>
<div id="edgeL" class="abs"></div>
<div id="edgeR" class="abs"></div>
</div>
</body>
</html>
